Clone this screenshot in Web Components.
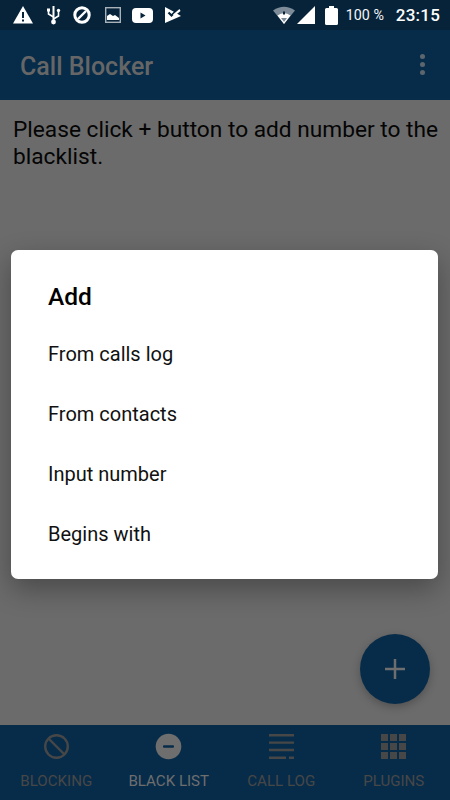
<!DOCTYPE html>
<html>
<head>
<meta charset="utf-8">
<style>
  html, body { margin: 0; height: 100%; overflow: hidden; }
  body { font-family: Roboto, "Liberation Sans", sans-serif; background: #6b6b6b; }
</style>
</head>
<body>
<call-blocker-app>
  <status-bar slot="status"></status-bar>
  <app-bar slot="bar" titulo="Call Blocker"></app-bar>
  <span slot="hint">Please click + button to add number to the blacklist.</span>
  <bottom-nav slot="nav">
    <nav-item label="BLOCKING" icon="blocking"></nav-item>
    <nav-item label="BLACK LIST" icon="blacklist" active></nav-item>
    <nav-item label="CALL LOG" icon="calllog"></nav-item>
    <nav-item label="PLUGINS" icon="plugins"></nav-item>
  </bottom-nav>
  <add-fab slot="fab"></add-fab>
  <add-dialog slot="dialog" titulo="Add">
    <dialog-option>From calls log</dialog-option>
    <dialog-option>From contacts</dialog-option>
    <dialog-option>Input number</dialog-option>
    <dialog-option>Begins with</dialog-option>
  </add-dialog>
</call-blocker-app>

<script>
const icons = {
  blocking: `<circle cx="12.500" cy="12.500" r="11.300" fill="none" stroke="currentColor" stroke-width="2.400"/><path d="M4.500 4.500l16 16" stroke="currentColor" stroke-width="2.400"/>`,
  blacklist: `<circle cx="12.500" cy="12.500" r="12.800" fill="currentColor"/><rect x="7" y="11.300" width="11" height="2.400" rx="1" fill="#072c4a"/>`,
  calllog: `<path d="M0 0h25v2.400H0zM0 7.400h25v2.400H0zM0 14.800h25v2.400H0zM0 22.500h17v2.400H0zM20 22.500h5v2.400h-5z" fill="currentColor"/>`,
  plugins: `<path d="M0 0h7v7H0zM9 0h7v7H9zM18 0h7v7h-7zM0 9h7v7H0zM9 9h7v7H9zM18 9h7v7h-7zM0 18h7v7H0zM9 18h7v7H9zM18 18h7v7h-7z" fill="currentColor"/>`
};

class CallBlockerApp extends HTMLElement {
  constructor() {
    super();
    this.attachShadow({ mode: "open" }).innerHTML = `
      <style>
        :host { display: flex; flex-direction: column; position: relative; width: 450px; height: 800px; overflow: hidden; background: #6b6b6b; }
        .content { flex: 1; padding: 16px 12px 16px 13px; color: #050505; font-size: 22.700px; line-height: 27px; }
        .dialog { position: absolute; left: 11px; top: 250px; }
        .fab { position: absolute; left: 360px; top: 634px; }
      </style>
      <slot name="status"></slot>
      <slot name="bar"></slot>
      <div class="content"><slot name="hint"></slot></div>
      <slot name="nav"></slot>
      <div class="fab"><slot name="fab"></slot></div>
      <div class="dialog"><slot name="dialog"></slot></div>
    `;
  }
}

class StatusBar extends HTMLElement {
  constructor() {
    super();
    this.attachShadow({ mode: "open" }).innerHTML = `
      <style>
        :host { display: flex; align-items: center; height: 30px; padding: 0 10px 0 13px; background: #062339; color: #fff; }
        .left { display: flex; align-items: center; flex: 1; }
        .right { display: flex; align-items: center; }
        svg { display: block; }
        .pct { font-size: 14.300px; margin: 0 12px 0 8px; color: #f4f6f7; }
        .time { font-size: 17px; font-weight: 500; letter-spacing: 0.2px; }
      </style>
      <div class="left">
        <svg width="20" height="18" viewBox="0 0 20 18"><path d="M10 0L20 17.500H0z" fill="#fff"/><path d="M9 6h2v6H9zM9 13.500h2v2H9z" fill="#062339"/></svg>
        <svg width="15" height="20" viewBox="0 0 15 20" style="margin-left:13px"><path d="M7.500 1v15" stroke="#fff" stroke-width="2"/><path d="M7.500 12L2.500 9V6M7.500 14l5-3V7" stroke="#fff" stroke-width="1.600" fill="none"/><circle cx="7.500" cy="17" r="2.400" fill="#fff"/><rect x="1" y="3.500" width="3" height="3" fill="#fff"/><circle cx="12.500" cy="5.500" r="1.700" fill="#fff"/></svg>
        <svg width="18" height="18" viewBox="0 0 18 18" style="margin-left:12px"><circle cx="9" cy="9" r="7.200" fill="none" stroke="#fff" stroke-width="3"/><path d="M5 13L13 5" stroke="#fff" stroke-width="2.400"/></svg>
        <svg width="16" height="16" viewBox="0 0 16 16" style="margin-left:14px"><rect x="0.700" y="0.700" width="14.600" height="14.600" fill="none" stroke="#a9b2b9" stroke-width="1.400"/><path d="M2 13V9l3-2 3 2 2-1 4 3v2z" fill="#fff"/></svg>
        <svg width="21" height="15" viewBox="0 0 21 15" style="margin-left:11px"><rect width="21" height="15" rx="4" fill="#fff"/><path d="M8.500 4.500l5 3-5 3z" fill="#062339"/></svg>
        <svg width="16" height="16" viewBox="0 0 16 16" style="margin-left:12px"><path d="M0 0l7.500 4L16 9 0 16z" fill="#fff"/><path d="M3.500 5.500l3 3 7-7" stroke="#062339" stroke-width="2.200" fill="none"/><path d="M8 7.500l6.500-5.500 1 2-6 5z" fill="#fff"/></svg>
      </div>
      <div class="right">
        <svg width="22" height="18" viewBox="0 0 22 18"><path d="M0 4.500Q11-3 22 4.500L11 18z" fill="#7d8c98"/><path d="M4.500 9.500Q11 5 17.500 9.500L11 18z" fill="#fff"/><path d="M8 12h6l-3 4z" fill="#7d8c98"/><path d="M10 5.500h2v3h-2z" fill="#062339"/></svg>
        <svg width="18" height="18" viewBox="0 0 18 18" style="margin-left:2px"><path d="M18 0v18H0z" fill="#fff"/></svg>
        <svg width="13" height="20" viewBox="0 0 13 20" style="margin-left:10px"><path d="M1.500 3H4V1h5v2h2.500A1.500 1.500 0 0 1 13 4.500V18.500A1.500 1.500 0 0 1 11.500 20h-10A1.500 1.500 0 0 1 0 18.500V4.500A1.500 1.500 0 0 1 1.500 3z" fill="#fff"/></svg>
        <span class="pct">100 %</span>
        <span class="time">23:15</span>
      </div>
    `;
  }
}

class AppBar extends HTMLElement {
  constructor() {
    super();
    this.attachShadow({ mode: "open" }).innerHTML = `
      <style>
        :host { display: flex; align-items: center; justify-content: space-between; height: 70px; padding: 2px 25px 0 20px; box-sizing: border-box; background: #072c4a; color: #666; }
        .titulo { font-size: 25px; font-weight: 500; }
        .dots { display: flex; flex-direction: column; gap: 3px; margin-top: -4px; }
        .dots i { display: block; width: 5px; height: 5px; border-radius: 50%; background: #5d666e; }
      </style>
      <div class="titulo"></div>
      <div class="dots"><i></i><i></i><i></i></div>
    `;
  }
  connectedCallback() {
    this.shadowRoot.querySelector(".titulo").textContent = this.getAttribute("titulo") || "";
  }
}

class BottomNav extends HTMLElement {
  constructor() {
    super();
    this.attachShadow({ mode: "open" }).innerHTML = `
      <style>
        :host { display: grid; grid-template-columns: repeat(4, 1fr); height: 75px; background: #072c4a; }
      </style>
      <slot></slot>
    `;
  }
}

class NavItem extends HTMLElement {
  constructor() {
    super();
    this.attachShadow({ mode: "open" }).innerHTML = `
      <style>
        :host { display: flex; flex-direction: column; align-items: center; color: #474747; }
        :host([active]) { color: #6e6e6e; }
        svg { display: block; margin-top: 9px; overflow: visible; }
        .label { font-size: 15.100px; line-height: 17px; margin-top: 14px; }
      </style>
      <svg width="25" height="25" viewBox="0 0 25 25"></svg>
      <div class="label"></div>
    `;
  }
  connectedCallback() {
    this.shadowRoot.querySelector("svg").innerHTML = icons[this.getAttribute("icon")] || "";
    this.shadowRoot.querySelector(".label").textContent = this.getAttribute("label") || "";
  }
}

class AddFab extends HTMLElement {
  constructor() {
    super();
    this.attachShadow({ mode: "open" }).innerHTML = `
      <style>
        :host { display: flex; align-items: center; justify-content: center; width: 70px; height: 70px; border-radius: 50%; background: #072c4a; box-shadow: 0 3px 8px rgba(0,0,0,.25); }
        svg { display: block; }
      </style>
      <svg width="20" height="20" viewBox="0 0 20 20"><path d="M8.750 0h2.500v20h-2.500zM0 8.750h20v2.500H0z" fill="#6e6e6e"/></svg>
    `;
  }
}

class AddDialog extends HTMLElement {
  constructor() {
    super();
    this.attachShadow({ mode: "open" }).innerHTML = `
      <style>
        :host { display: block; box-sizing: border-box; width: 427px; height: 329px; padding: 30px 0 0 37px; background: #fff; border-radius: 7px; color: #000; box-shadow: 0 10px 28px rgba(0,0,0,.32); }
        .titulo { font-size: 24.500px; font-weight: 500; line-height: 34px; margin-bottom: 10px; }
      </style>
      <div class="titulo"></div>
      <slot></slot>
    `;
  }
  connectedCallback() {
    this.shadowRoot.querySelector(".titulo").textContent = this.getAttribute("titulo") || "";
  }
}

class DialogOption extends HTMLElement {
  constructor() {
    super();
    this.attachShadow({ mode: "open" }).innerHTML = `
      <style>
        :host { display: block; height: 60px; line-height: 60px; font-size: 20px; color: #111; }
      </style>
      <slot></slot>
    `;
  }
}

customElements.define("call-blocker-app", CallBlockerApp);
customElements.define("status-bar", StatusBar);
customElements.define("app-bar", AppBar);
customElements.define("bottom-nav", BottomNav);
customElements.define("nav-item", NavItem);
customElements.define("add-fab", AddFab);
customElements.define("add-dialog", AddDialog);
customElements.define("dialog-option", DialogOption);
</script>
</body>
</html>
